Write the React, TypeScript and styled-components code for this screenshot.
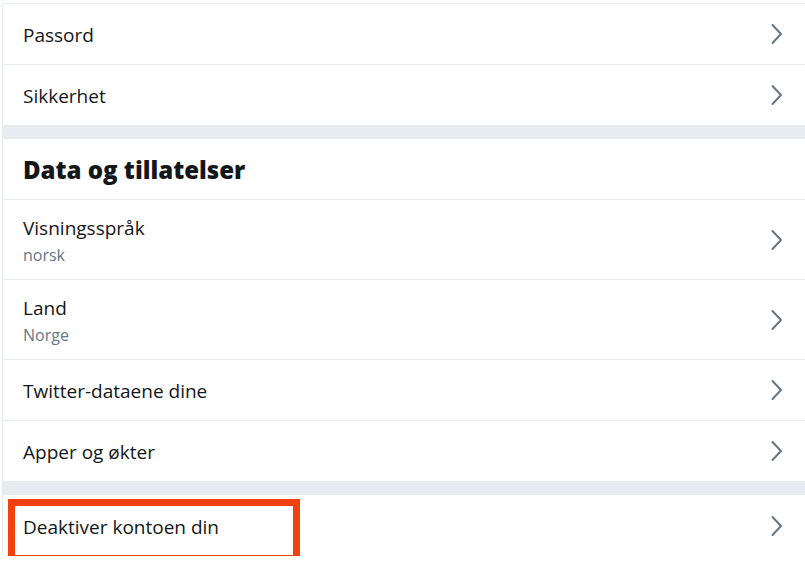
import styled, { createGlobalStyle } from 'styled-components';

const GlobalStyle = createGlobalStyle`
  body {
    margin: 0;
    background: #ffffff;
    font-family: "Open Sans", "Noto Sans", sans-serif;
  }
`;

const Panel = styled.div`
  margin-left: 2px;
  border-left: 1px solid #e6ecf0;
  border-top: 1px solid #e6ecf0;
  margin-top: 3px;
  width: 803px;
  box-sizing: border-box;
`;

const Row = styled.div<{ $tall?: boolean }>`
  height: ${(p) => (p.$tall ? 80 : 61)}px;
  box-sizing: border-box;
  border-bottom: 1px solid #e6ecf0;
  padding: 0 20px;
  display: flex;
  align-items: center;
  justify-content: space-between;
  position: relative;
  &:last-child {
    border-bottom: none;
  }
`;

const Texts = styled.div`
  display: flex;
  flex-direction: column;
  padding-top: 2px;
`;

const Title = styled.div`
  font-size: 19px;
  color: #14171a;
  line-height: 28px;
`;

const Sub = styled.div`
  font-size: 16px;
  color: #657786;
  line-height: 26px;
`;

const Band = styled.div`
  height: 13px;
  background: #e6ecf0;
`;

const Heading = styled.h2`
  margin: 0;
  height: 61px;
  box-sizing: border-box;
  border-bottom: 1px solid #e6ecf0;
  padding: 0 20px;
  display: flex;
  align-items: center;
  font-family: "Open Sans", "Noto Sans", sans-serif;
  font-size: 24px;
  font-weight: 800;
  color: #14171a;
`;

const Highlight = styled.div`
  position: absolute;
  left: 5px;
  top: 4px;
  width: 292px;
  height: 63px;
  box-sizing: border-box;
  border: 7px solid #f2400f;
`;

const Chevron = () => (
  <svg width="24" height="24" viewBox="0 0 24 24" fill="none">
    <path
      d="M11.5 3 L20 12 L11.5 21"
      stroke="#657786"
      strokeWidth="2"
      strokeLinecap="round"
      strokeLinejoin="round"
    />
  </svg>
);

type Item = { title: string; sub?: string; highlight?: boolean };

const Entry = ({ item }: { item: Item }) => (
  <Row $tall={!!item.sub}>
    <Texts>
      <Title>{item.title}</Title>
      {item.sub && <Sub>{item.sub}</Sub>}
    </Texts>
    <Chevron />
    {item.highlight && <Highlight />}
  </Row>
);

const account: Item[] = [{ title: 'Passord' }, { title: 'Sikkerhet' }];

const data: Item[] = [
  { title: 'Visningsspråk', sub: 'norsk' },
  { title: 'Land', sub: 'Norge' },
  { title: 'Twitter-dataene dine' },
  { title: 'Apper og økter' },
];

export default function App() {
  return (
    <>
      <GlobalStyle />
      <Panel>
        {account.map((i) => (
          <Entry key={i.title} item={i} />
        ))}
        <Band />
        <Heading>Data og tillatelser</Heading>
        {data.map((i) => (
          <Entry key={i.title} item={i} />
        ))}
        <Band />
        <Entry item={{ title: 'Deaktiver kontoen din', highlight: true }} />
      </Panel>
    </>
  );
}
